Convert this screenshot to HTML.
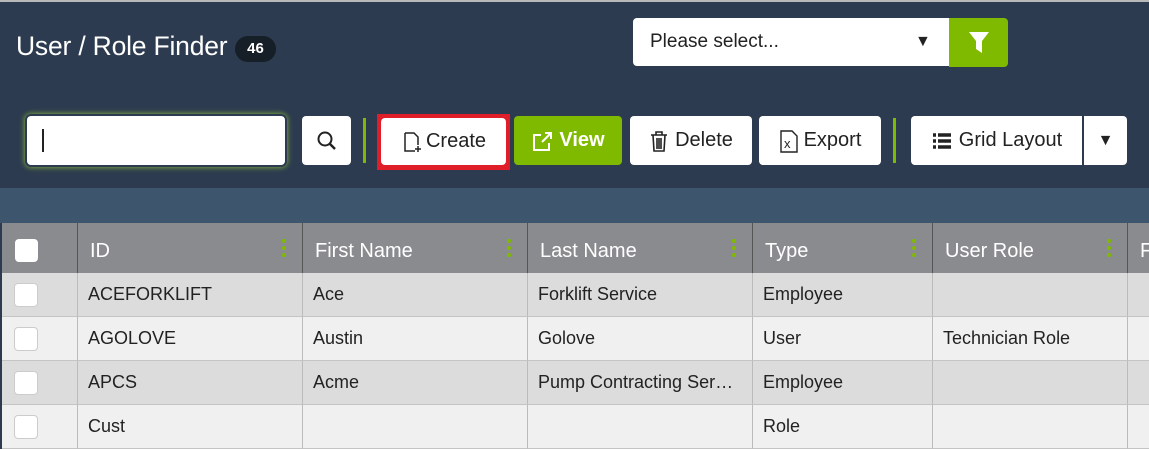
<!DOCTYPE html>
<html><head><style>
body{margin:0;width:1149px;height:440px;overflow:hidden;background:#2c3b4f;font-family:"Liberation Sans",sans-serif;position:relative}
.a{position:absolute}
.btn{position:absolute;background:#fff;border-radius:4px;top:116px;height:49px;display:flex;align-items:center;justify-content:center;font-size:20px;color:#222}
.hd{position:absolute;top:223px;height:50px;background:#8a8b8f;color:#fff;font-size:20px;line-height:56px;border-right:1px solid #555;box-sizing:border-box;padding-left:12px}
.dots{position:absolute;right:16px;top:16px;width:4px}
.dots i{display:block;width:4px;height:4px;border-radius:2px;background:#7fba00;margin-bottom:3px}
.c{position:absolute;height:44px;line-height:42px;font-size:18px;color:#222;border-right:1px solid #bbb;border-bottom:1px solid #c4c4c4;box-sizing:border-box;padding-left:10px;white-space:nowrap;overflow:hidden}
.cb{position:absolute;left:12px;width:22px;height:22px;background:#fff;border-radius:4px;border:1px solid #ccc}
</style></head><body>
<div class="a" style="left:0;top:0;width:1149px;height:2px;background:#b8b8b8"></div>
<div class="a" style="left:16px;top:31px;font-size:26.5px;color:#fff;letter-spacing:-0.2px">User / Role Finder</div>
<div class="a" style="left:235px;top:36px;width:41px;height:26px;border-radius:13px;background:#161e27;color:#fff;font-size:15px;font-weight:bold;text-align:center;line-height:26px">46</div>
<div class="a" style="left:633px;top:18px;width:316px;height:48px;background:#fff;border-radius:4px 0 0 4px;font-size:19px;color:#222;line-height:48px;box-sizing:border-box;padding-left:17px">Please select...<span style="position:absolute;left:282px;font-size:16px">▼</span></div>
<div class="a" style="left:949px;top:18px;width:59px;height:49px;background:#7fba00;border-radius:0 4px 4px 0"><svg width="59" height="49"><path d="M20 14h20l-7 9v12l-6-4v-8z" fill="#fff"/></svg></div>
<div class="a" style="left:25px;top:114px;width:262px;height:53px;border-radius:6px;box-shadow:0 0 6px #8fbf3a"></div>
<div class="a" style="left:27px;top:116px;width:258px;height:49px;background:#fff;border-radius:4px"></div>
<div class="a" style="left:42px;top:129px;width:2px;height:23px;background:#222"></div>
<div class="btn" style="left:302px;width:49px"><svg width="24" height="24"><circle cx="10" cy="10" r="6.5" stroke="#222" stroke-width="2" fill="none"/><path d="M15 15l5 5" stroke="#222" stroke-width="2.5"/></svg></div>
<div class="a" style="left:363px;top:118px;width:3px;height:45px;background:#7fba00"></div>
<div class="a" style="left:377px;top:114px;width:133px;height:56px;background:#e01e2a"></div>
<div class="btn" style="left:381px;top:118px;width:125px;height:47px"><svg width="22" height="24" style="margin-right:3px"><path d="M4 3h9l4 4v8M4 3v18h10M17 16v6M14 19h6" stroke="#222" stroke-width="1.5" fill="none"/></svg>Create</div>
<div class="btn" style="left:514px;width:108px;background:#7fba00;color:#fff;font-weight:bold"><svg width="24" height="22" style="margin-right:4px"><path d="M14 3h6v6M20 3l-9 9M10 5H3v15h15v-7" stroke="#fff" stroke-width="2" fill="none"/></svg>View</div>
<div class="btn" style="left:630px;width:122px"><svg width="20" height="22" style="margin-right:6px"><path d="M2 5h16M7 5V2h6v3M4 5l1 16h10l1-16M8 8v11M10 8v11M12 8v11" stroke="#222" stroke-width="1.6" fill="none"/></svg>Delete</div>
<div class="btn" style="left:759px;width:122px"><svg width="20" height="24" style="margin-right:5px"><path d="M2 2h11l5 5v16H2z" stroke="#222" stroke-width="1.4" fill="none"/><text x="5" y="19" font-size="13" font-family="Liberation Sans" fill="#222">x</text></svg>Export</div>
<div class="a" style="left:893px;top:118px;width:3px;height:45px;background:#7fba00"></div>
<div class="btn" style="left:911px;width:171px;border-radius:4px 0 0 4px"><svg width="22" height="20" style="margin-right:6px"><path d="M2 4h3M7 4h13M2 10h3M7 10h13M2 16h3M7 16h13" stroke="#222" stroke-width="3.5"/></svg>Grid Layout</div>
<div class="btn" style="left:1084px;width:43px;border-radius:0 4px 4px 0;font-size:16px">▼</div>
<div class="a" style="left:0;top:188px;width:1149px;height:35px;background:#3d566e"></div>
<div class="a" style="left:0;top:223px;width:2px;height:217px;background:#2c3b4f;z-index:2"></div>
<div class="hd" style="left:2px;width:76px"><div class="cb" style="left:13px;top:16px;width:23px;height:23px;border:none"></div></div>
<div class="hd" style="left:78px;width:225px">ID<div class="dots"><i></i><i></i><i></i></div></div>
<div class="hd" style="left:303px;width:225px">First Name<div class="dots"><i></i><i></i><i></i></div></div>
<div class="hd" style="left:528px;width:225px">Last Name<div class="dots"><i></i><i></i><i></i></div></div>
<div class="hd" style="left:753px;width:180px">Type<div class="dots"><i></i><i></i><i></i></div></div>
<div class="hd" style="left:933px;width:195px">User Role<div class="dots"><i></i><i></i><i></i></div></div>
<div class="hd" style="left:1128px;width:30px">F</div>
<div id="rows"></div>
<script>
var d=[["ACEFORKLIFT","Ace","Forklift Service","Employee",""],["AGOLOVE","Austin","Golove","User","Technician Role"],["APCS","Acme","Pump Contracting Ser…","Employee",""],["Cust","","","Role",""]];
var L=[2,78,303,528,753,933,1128],W=[76,225,225,225,180,195,30],h="";
d.forEach(function(r,i){var t=273+i*44,bg=i%2?"#f0f0f0":"#dcdcdc";
for(var j=0;j<7;j++){var txt=j==0?'<div class="cb" style="top:10px"></div>':(j<6?r[j-1]:"");
h+='<div class="c" style="left:'+L[j]+'px;top:'+t+'px;width:'+W[j]+'px;background:'+bg+'">'+txt+'</div>';}});
document.getElementById("rows").innerHTML=h;
</script>
</body></html>
